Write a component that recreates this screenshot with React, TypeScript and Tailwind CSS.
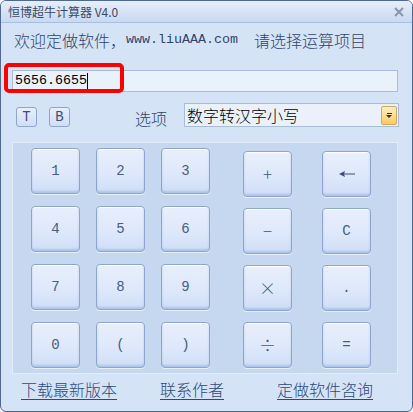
import React from "react";

const cjk = { fontFamily: '"Noto Sans CJK SC", "Noto Sans", sans-serif' };
const mono = { fontFamily: '"Liberation Mono", "Noto Sans CJK SC", monospace' };

function Key({ children, op }: { children: React.ReactNode; op?: boolean }) {
  return (
    <div
      className={
        "flex h-[46px] w-[49px] items-center justify-center rounded-[4px] border border-[#8ea6cf] bg-gradient-to-b from-[#e8effc] via-[#dfe9fb] to-[#cfdef7] text-[#475c86] shadow-[inset_0_1px_0_#ffffff,inset_0_-2px_2px_rgba(150,178,225,0.6),0_1px_0_#e6eefa] " +
        (op ? "text-[17px] font-light" : "text-[14px]")
      }
      style={op ? cjk : mono}
    >
      {children}
    </div>
  );
}

function BackArrow() {
  return (
    <svg width="16" height="8" viewBox="0 0 16 8">
      <line x1="4" y1="4" x2="16" y2="4" stroke="#3a4f7b" strokeWidth="1" />
      <path d="M0 4 L6 1 L5 4 L6 7 Z" fill="#3a4f7b" />
    </svg>
  );
}

export default function App() {
  const left = ["1", "2", "3", "4", "5", "6", "7", "8", "9", "0", "(", ")"];
  return (
    <div
      className="relative flex h-[412px] w-[413px] flex-col overflow-hidden rounded-[6px] border border-[#4f6994] bg-[#d5e3f6]"
      style={cjk}
    >
      {/* title bar */}
      <div className="flex h-[22px] items-center justify-between border-b border-[#a9bfde] bg-gradient-to-b from-[#e6eefa] to-[#c8d9f0] pl-[7px] pr-[8px]">
        <span className="text-[12px] leading-none text-[#3b4967]">恒博超牛计算器 V4.0</span>
        <svg width="10" height="10" viewBox="0 0 10 10">
          <path d="M1 1 L9 9 M9 1 L1 9" stroke="#8a95a8" strokeWidth="2" />
        </svg>
      </div>

      {/* heading */}
      <div className="mt-[7px] flex h-[20px] items-center pl-[13px] text-[16px] font-light leading-[20px] text-[#2f4570]">
        <span>欢迎定做软件，</span>
        <span className="text-[13.33px]" style={mono}>www.liuAAA.com</span>
        <span className="ml-[16px]">请选择运算项目</span>
      </div>

      {/* input */}
      <div className="relative ml-[11px] mr-[14px] mt-[20px] h-[22px]">
        <div className="flex h-full items-center border border-[#a9bcd9] bg-[#e9f1fb] pl-[2px]">
          <span className="text-[13.33px] leading-none text-black" style={mono}>5656.6655</span>
          <span className="h-[16px] w-px bg-black" />
        </div>
        <div className="absolute -left-[8px] -top-[7px] h-[30px] w-[120px] rounded-[5px] border-[4px] border-[#ff0000]" />
      </div>

      {/* options row */}
      <div className="mt-[11px] flex h-[24px] items-center">
        <div className="ml-[15px] mt-[4px] flex h-[20px] w-[21px] items-center justify-center rounded-[3px] border border-[#8ea6cf] bg-gradient-to-b from-[#e8effc] to-[#d0def6] text-[14px] text-[#3a4f7b]" style={mono}>T</div>
        <div className="ml-[12px] mt-[4px] flex h-[20px] w-[21px] items-center justify-center rounded-[3px] border border-[#8ea6cf] bg-gradient-to-b from-[#e8effc] to-[#d0def6] text-[14px] text-[#3a4f7b]" style={mono}>B</div>
        <span className="ml-[65px] mt-[5px] text-[16px] font-light leading-none text-[#2f4570]">选项</span>
        <div className="ml-[17px] flex h-[24px] w-[215px] items-center justify-between border border-[#a9bcd9] bg-[#eaf1fb] pl-[2px] pr-[1px]">
          <span className="text-[16px] font-light leading-none text-black">数字转汉字小写</span>
          <div className="flex h-[19px] w-[16px] flex-col items-center justify-center rounded-[2px] border border-[#d0a968] bg-gradient-to-b from-[#fff0c0] to-[#ffc860]">
            <span className="mb-[1px] h-px w-[5px] bg-[#333]" />
            <svg width="6" height="3" viewBox="0 0 6 3">
              <path d="M0 0 L6 0 L3 3 Z" fill="#333" />
            </svg>
          </div>
        </div>
      </div>

      {/* keypad */}
      <div className="ml-[11px] mt-[15px] flex h-[232px] w-[386px] border border-[#e3ecf9] bg-[#c5d8f0]">
        <div className="ml-[18px] mt-[5px] grid h-fit grid-cols-[49px_49px_49px] gap-x-[16px] gap-y-[12px]">
          {left.map((k) => (
            <Key key={k}>{k}</Key>
          ))}
        </div>
        <div className="ml-[33px] mt-[8px] grid h-fit grid-cols-[49px_49px] gap-x-[30px] gap-y-[11px]">
          <Key op>+</Key>
          <Key><BackArrow /></Key>
          <Key op>−</Key>
          <Key>C</Key>
          <Key op>×</Key>
          <Key>.</Key>
          <Key op>÷</Key>
          <Key>=</Key>
        </div>
      </div>

      {/* footer links */}
      <div className="mt-[5px] flex h-[20px] items-center pl-[20px] text-[16px] font-light leading-[20px] text-[#2c4a7d]">
        <span className="underline underline-offset-[3px]">下载最新版本</span>
        <span className="ml-[43px] underline underline-offset-[3px]">联系作者</span>
        <span className="ml-[53px] underline underline-offset-[3px]">定做软件咨询</span>
      </div>
    </div>
  );
}
